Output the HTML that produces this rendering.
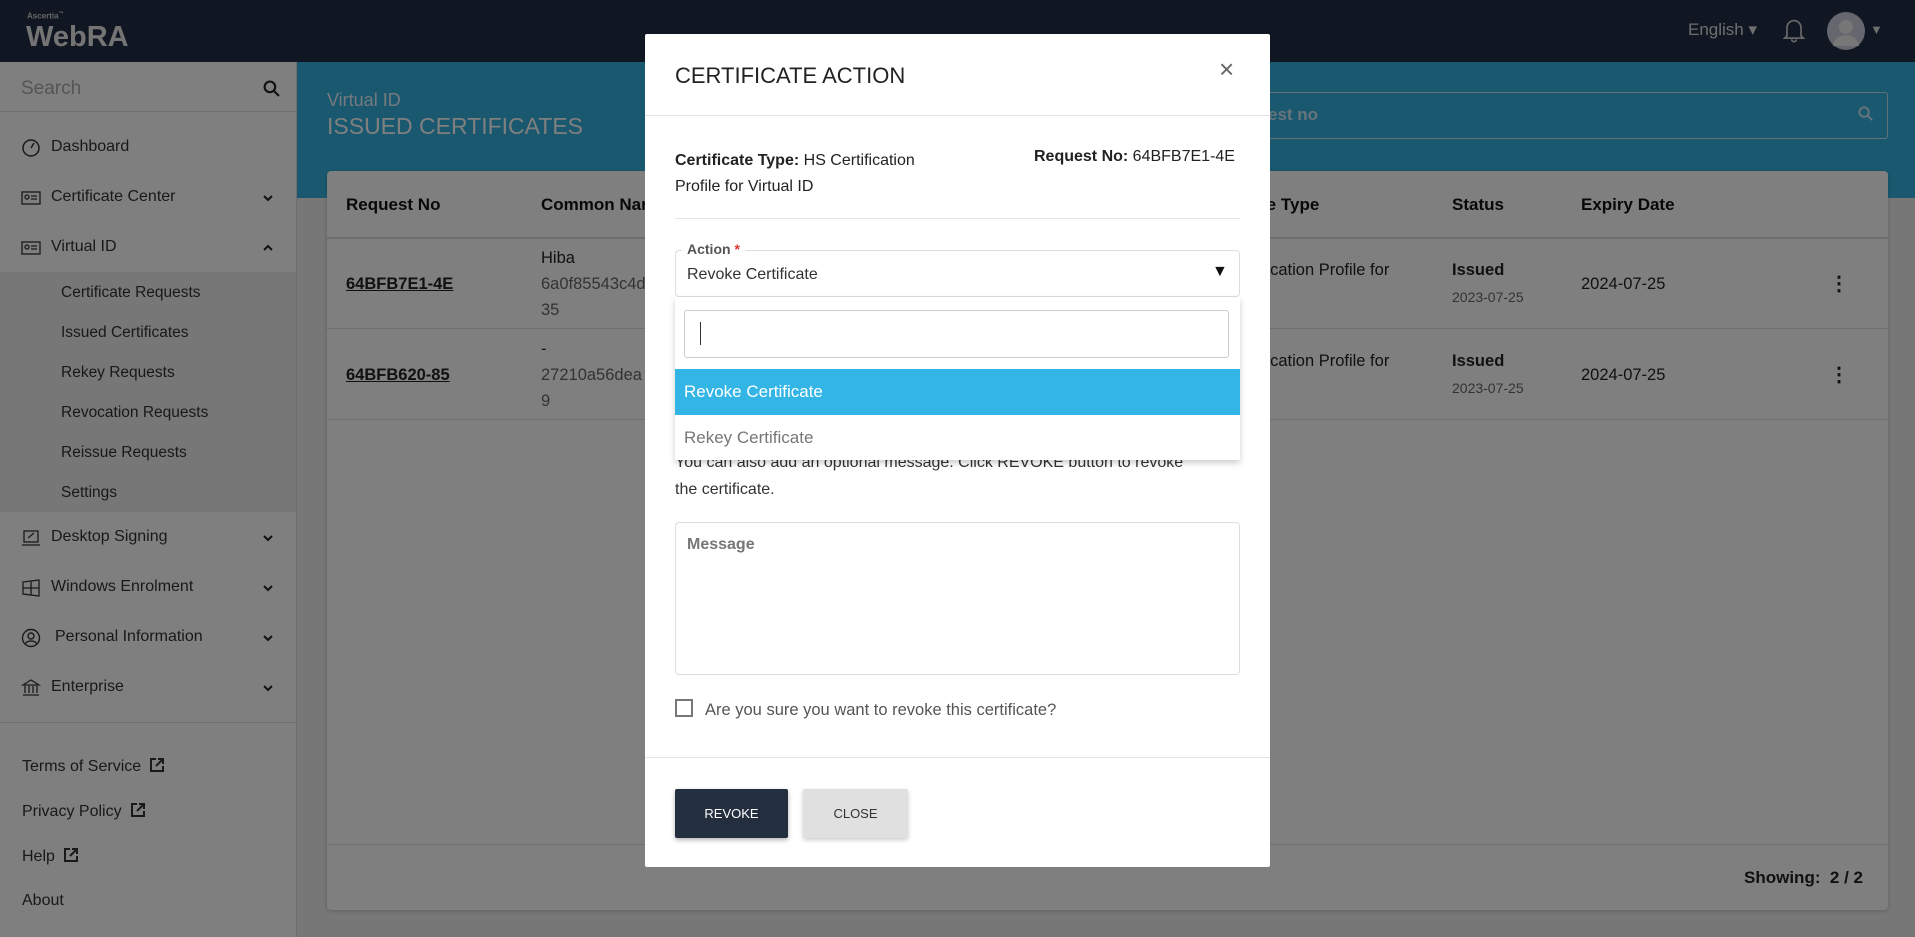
<!DOCTYPE html>
<html><head><meta charset="utf-8"><style>
*{margin:0;padding:0;box-sizing:border-box}
body{width:1915px;height:937px;overflow:hidden;position:relative;font-family:"Liberation Sans",sans-serif;background:#eee;color:#222}
.a{position:absolute;white-space:nowrap}
#top{left:0;top:0;width:1915px;height:62px;background:#222f44}
#side{left:0;top:62px;width:297px;height:875px;background:#fff;border-right:1px solid #ddd}
.mi{position:absolute;left:51px;font-size:16px;color:#333}
.ic{position:absolute;left:21px;width:20px;height:20px}
.chev{position:absolute;left:262px;width:12px;height:12px}
.sub{position:absolute;left:61px;font-size:15.5px;color:#333}
.th{font-weight:bold;font-size:17px;color:#111}
.td{font-size:16.5px;color:#222}
.g{color:#666}
#ov{left:0;top:0;width:1915px;height:937px;background:rgba(0,0,0,.5)}
#modal{left:645px;top:34px;width:625px;height:833px;background:#fff;border-radius:2px}
.m{position:absolute;white-space:nowrap}
.ext{display:inline-block;vertical-align:-2px;margin-left:8px}
</style></head><body>
<div class="a" id="top">
 <div class="a" style="left:27px;top:11px;font-size:8px;color:#ccc;font-weight:bold">Ascertia<sup style="font-size:5px">™</sup></div>
 <div class="a" style="left:26px;top:21px;font-size:29px;color:#e8e8e8;font-weight:bold;letter-spacing:0px">WebRA</div>
 <div class="a" style="left:1688px;top:20px;font-size:17px;color:#ddd">English ▾</div>
 <svg class="a" style="left:1780px;top:16px" width="28" height="28" viewBox="0 0 24 24" fill="none" stroke="#ccc" stroke-width="1.5"><path d="M6 17V10a6 6 0 0 1 12 0v7l2 2H4z M10 20a2 2 0 0 0 4 0"/></svg>
 <div class="a" style="left:1827px;top:12px;width:38px;height:38px;border-radius:50%;background:#ccd"><svg width="38" height="38" viewBox="0 0 38 38"><circle cx="19" cy="15" r="7" fill="#eee"/><path d="M6 34a13 11 0 0 1 26 0" fill="#eee"/></svg></div>
 <div class="a" style="left:1870px;top:22px;font-size:13px;color:#ddd">▼</div>
</div>
<svg width="0" height="0" style="position:absolute"><defs>
<symbol id="cd" viewBox="0 0 12 12"><path d="M2 4l4 4 4-4" fill="none" stroke="#222" stroke-width="2"/></symbol>
<symbol id="cu" viewBox="0 0 12 12"><path d="M2 8l4-4 4 4" fill="none" stroke="#222" stroke-width="2"/></symbol>
<symbol id="ex" viewBox="0 0 16 16"><path d="M7 2H2v12h12V9M9 2h5v5M14 2L7 9" fill="none" stroke="#333" stroke-width="2"/></symbol>
</defs></svg>
<div class="a" id="side">
 <div class="a" style="left:0;top:0;width:296px;height:50px;border-bottom:1px solid #ddd"></div>
 <div class="a" style="left:21px;top:16px;font-size:19px;color:#aaa">Search</div>
 <svg class="a" style="left:263px;top:18px" width="17" height="17" viewBox="0 0 16 16" fill="none" stroke="#222" stroke-width="2"><circle cx="6.5" cy="6.5" r="5"/><path d="M10.5 10.5 15 15"/></svg>
 <svg class="ic" style="top:76px" viewBox="0 0 20 20" fill="none" stroke="#333" stroke-width="1.5"><circle cx="10" cy="10" r="8"/><path d="M10 10l3-5"/></svg>
 <div class="mi" style="top:76px">Dashboard</div>
 <svg class="ic" style="top:126px" viewBox="0 0 20 20" fill="none" stroke="#333" stroke-width="1.3"><rect x="1" y="4" width="18" height="12"/><circle cx="6" cy="9" r="2"/><path d="M10 8h6M10 11h6"/></svg>
 <div class="mi" style="top:126px">Certificate Center</div><svg class="chev" style="top:130px"><use href="#cd"/></svg>
 <svg class="ic" style="top:176px" viewBox="0 0 20 20" fill="none" stroke="#333" stroke-width="1.3"><rect x="1" y="4" width="18" height="12"/><circle cx="6" cy="9" r="2"/><path d="M10 8h6M10 11h6"/></svg>
 <div class="mi" style="top:176px">Virtual ID</div><svg class="chev" style="top:180px"><use href="#cu"/></svg>
 <div class="a" style="left:0;top:210px;width:296px;height:240px;background:#eee"></div>
 <div class="sub" style="top:222px">Certificate Requests</div>
 <div class="sub" style="top:262px">Issued Certificates</div>
 <div class="sub" style="top:302px">Rekey Requests</div>
 <div class="sub" style="top:342px">Revocation Requests</div>
 <div class="sub" style="top:382px">Reissue Requests</div>
 <div class="sub" style="top:422px">Settings</div>
 <svg class="ic" style="top:466px" viewBox="0 0 20 20" fill="none" stroke="#333" stroke-width="1.3"><rect x="3" y="3" width="14" height="11"/><path d="M1 17h18M7 10l6-5"/></svg>
 <div class="mi" style="top:466px">Desktop Signing</div><svg class="chev" style="top:470px"><use href="#cd"/></svg>
 <svg class="ic" style="top:516px" viewBox="0 0 20 20" fill="none" stroke="#333" stroke-width="1.3"><path d="M2 4l16-2v16L2 16zM10 3v14M2 10h16"/></svg>
 <div class="mi" style="top:516px">Windows Enrolment</div><svg class="chev" style="top:520px"><use href="#cd"/></svg>
 <svg class="ic" style="top:566px" viewBox="0 0 20 20" fill="none" stroke="#333" stroke-width="1.4"><circle cx="10" cy="10" r="8.5"/><circle cx="10" cy="8" r="3"/><path d="M4.5 15.5a6 4 0 0 1 11 0"/></svg>
 <div class="mi" style="top:566px;left:55px">Personal Information</div><svg class="chev" style="top:570px"><use href="#cd"/></svg>
 <svg class="ic" style="top:616px" viewBox="0 0 20 20" fill="none" stroke="#333" stroke-width="1.3"><path d="M2 7L10 2l8 5zM4 8v7M8 8v7M12 8v7M16 8v7M2 17h16"/></svg>
 <div class="mi" style="top:616px">Enterprise</div><svg class="chev" style="top:620px"><use href="#cd"/></svg>
 <div class="a" style="left:0;top:660px;width:296px;height:1px;background:#ddd"></div>
 <div class="mi" style="left:22px;top:695px">Terms of Service<svg class="ext" width="16" height="16"><use href="#ex"/></svg></div>
 <div class="mi" style="left:22px;top:740px">Privacy Policy<svg class="ext" width="16" height="16"><use href="#ex"/></svg></div>
 <div class="mi" style="left:22px;top:785px">Help<svg class="ext" width="16" height="16"><use href="#ex"/></svg></div>
 <div class="mi" style="left:22px;top:830px">About</div>
</div>
<div class="a" style="left:297px;top:62px;width:1618px;height:136px;background:#33b1df"></div>
<div class="a" style="left:327px;top:90px;font-size:18px;color:#e8f4fa">Virtual ID</div>
<div class="a" style="left:327px;top:113px;font-size:23px;color:#fff">ISSUED CERTIFICATES</div>
<div class="a" style="left:1200px;top:92px;width:688px;height:47px;border:1px solid #bfe4f3;border-radius:3px"></div>
<div class="a" style="left:1268px;top:105px;font-size:17px;font-weight:bold;color:#cdeaf6">est no</div>
<svg class="a" style="left:1858px;top:106px" width="15" height="15" viewBox="0 0 16 16" fill="none" stroke="#cdeaf6" stroke-width="2"><circle cx="6.5" cy="6.5" r="5"/><path d="M10.5 10.5 15 15"/></svg>
<div class="a" style="left:327px;top:171px;width:1561px;height:739px;background:#fff;border-radius:4px;box-shadow:0 1px 4px rgba(0,0,0,.2)">
 <div class="a" style="left:0;top:66px;width:1561px;height:2px;background:#ddd"></div>
 <div class="a" style="left:0;top:157px;width:1561px;height:1px;background:#ddd"></div>
 <div class="a" style="left:0;top:248px;width:1561px;height:1px;background:#ddd"></div>
 <div class="a" style="left:0;top:673px;width:1561px;height:1px;background:#ddd"></div>
 <div class="a th" style="left:19px;top:24px">Request No</div>
 <div class="a th" style="left:214px;top:24px">Common Name</div>
 <div class="a th" style="left:866px;top:24px">Certificate Type</div>
 <div class="a th" style="left:1125px;top:24px">Status</div>
 <div class="a th" style="left:1254px;top:24px">Expiry Date</div>
 <div class="a td" style="left:19px;top:104px;text-decoration:underline;font-weight:bold;color:#222">64BFB7E1-4E</div>
 <div class="a td" style="left:214px;top:78px">Hiba</div>
 <div class="a td g" style="left:214px;top:104px">6a0f85543c4d</div>
 <div class="a td g" style="left:214px;top:130px">35</div>
 <div class="a td" style="left:900px;top:90px">Certification Profile for</div>
 <div class="a" style="left:1125px;top:90px;font-size:16.5px;font-weight:bold">Issued</div>
 <div class="a g" style="left:1125px;top:118px;font-size:14px">2023-07-25</div>
 <div class="a td" style="left:1254px;top:104px">2024-07-25</div>
 <div class="a" style="left:1502px;top:100px;font-size:20px;font-weight:bold">⋮</div>
 <div class="a td" style="left:19px;top:195px;text-decoration:underline;font-weight:bold">64BFB620-85</div>
 <div class="a td" style="left:214px;top:169px">-</div>
 <div class="a td g" style="left:214px;top:195px">27210a56dea</div>
 <div class="a td g" style="left:214px;top:221px">9</div>
 <div class="a td" style="left:900px;top:181px">Certification Profile for</div>
 <div class="a" style="left:1125px;top:181px;font-size:16.5px;font-weight:bold">Issued</div>
 <div class="a g" style="left:1125px;top:209px;font-size:14px">2023-07-25</div>
 <div class="a td" style="left:1254px;top:195px">2024-07-25</div>
 <div class="a" style="left:1502px;top:191px;font-size:20px;font-weight:bold">⋮</div>
 <div class="a" style="left:1417px;top:697px;font-size:17px;font-weight:bold">Showing:&nbsp; 2 / 2</div>
</div>
<div class="a" id="ov"></div>
<div class="a" id="modal">
 <div class="m" style="left:30px;top:29px;font-size:22px;color:#222">CERTIFICATE ACTION</div>
 <div class="m" style="left:574px;top:20px;font-size:26px;color:#666">×</div>
 <div class="m" style="left:0;top:81px;width:625px;height:1px;background:#e3e3e3"></div>
 <div class="m" style="left:30px;top:114px;font-size:16px;line-height:26px;white-space:normal;width:270px"><b>Certificate Type:</b> HS Certification Profile for Virtual ID</div>
 <div class="m" style="left:389px;top:114px;font-size:16px"><b>Request No:</b> 64BFB7E1-4E</div>
 <div class="m" style="left:30px;top:184px;width:565px;height:1px;background:#e3e3e3"></div>
 <div class="m" style="left:30px;top:216px;width:565px;height:47px;border:1px solid #ddd;border-radius:4px"></div>
 <div class="m" style="left:37px;top:207px;padding:0 5px;background:#fff;font-size:14px;font-weight:bold;color:#555">Action <span style="color:#d33">*</span></div>
 <div class="m" style="left:42px;top:232px;font-size:16px;color:#333">Revoke Certificate</div>
 <div class="m" style="left:567px;top:229px;font-size:16px;color:#111">▼</div>
 <div class="m" style="left:30px;top:420px;font-size:16px;color:#333">You can also add an optional message. Click REVOKE button to revoke</div>
 <div class="m" style="left:30px;top:447px;font-size:16px;color:#333">the certificate.</div>
 <div class="m" style="left:30px;top:263px;width:565px;height:163px;background:#fff;box-shadow:0 3px 6px rgba(0,0,0,.2)">
  <div class="m" style="left:9px;top:13px;width:545px;height:48px;border:1px solid #ccc;border-radius:3px"></div>
  <div class="m" style="left:25px;top:25px;width:1px;height:23px;background:#333"></div>
  <div class="m" style="left:0;top:72px;width:565px;height:46px;background:#33b5e5"></div>
  <div class="m" style="left:9px;top:85px;font-size:17px;color:#fff">Revoke Certificate</div>
  <div class="m" style="left:9px;top:131px;font-size:17px;color:#777">Rekey Certificate</div>
 </div>
 <div class="m" style="left:30px;top:488px;width:565px;height:153px;border:1px solid #ddd;border-radius:4px"></div>
 <div class="m" style="left:42px;top:502px;font-size:16px;font-weight:bold;color:#777">Message</div>
 <div class="m" style="left:30px;top:665px;width:18px;height:18px;border:2px solid #777"></div>
 <div class="m" style="left:60px;top:667px;font-size:16.5px;color:#555">Are you sure you want to revoke this certificate?</div>
 <div class="m" style="left:0;top:723px;width:625px;height:1px;background:#e3e3e3"></div>
 <div class="m" style="left:30px;top:755px;width:113px;height:49px;background:#232f3e;border-radius:2px;box-shadow:0 2px 5px rgba(0,0,0,.3);color:#fff;font-size:13px;text-align:center;line-height:49px">REVOKE</div>
 <div class="m" style="left:158px;top:755px;width:105px;height:49px;background:#e0e0e0;border-radius:2px;box-shadow:0 2px 5px rgba(0,0,0,.2);color:#333;font-size:13px;text-align:center;line-height:49px">CLOSE</div>
</div>
</body></html>
